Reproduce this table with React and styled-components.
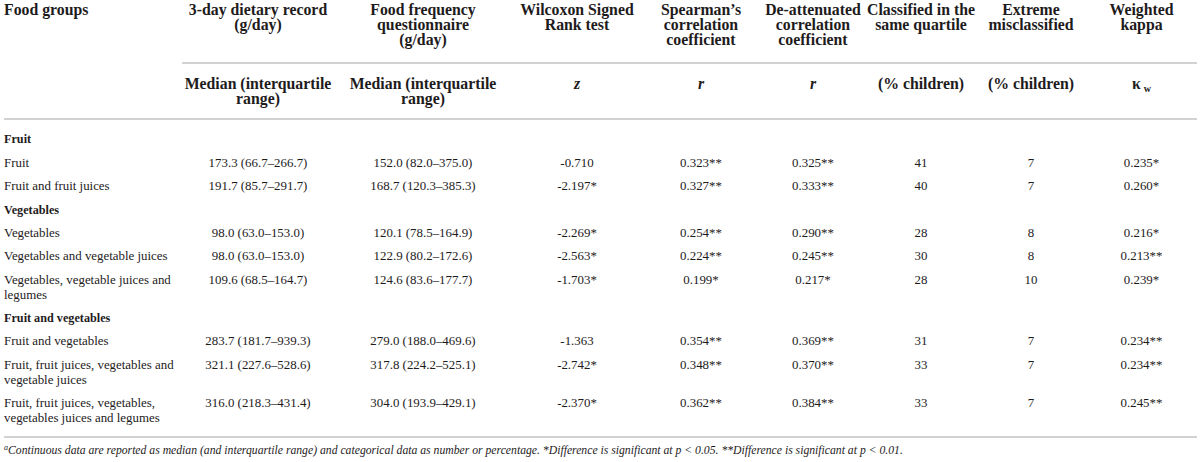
import React from "react";
import styled, { createGlobalStyle } from "styled-components";

const serif = `"Liberation Serif", "Times New Roman", serif`;

const GlobalStyle = createGlobalStyle`
    html, body {
        margin: 0;
        padding: 0;
        background: #ffffff;
    }
    body {
        font-family: ${serif};
        color: #1e1b1c;
    }
`;

const Page = styled.div`
    width: 1200px;
    height: 462px;
    padding: 0 3px 0 4px;
    box-sizing: border-box;
    overflow: hidden;
`;

const Table = styled.table`
    width: 1193px;
    border-collapse: collapse;
    table-layout: fixed;
    font-family: ${serif};
`;

const HeadCell = styled.th`
    font-family: ${serif};
    font-size: 15.8px;
    font-weight: bold;
    line-height: 15px;
    white-space: nowrap;
    vertical-align: top;
    text-align: ${props => (props.$left ? "left" : "center")};
    padding: ${props => (props.$top ? "2px 0 15px" : "12px 0 12px")};
    border-bottom: ${props => (props.$line ? "2px solid #d2d2d2" : "none")};
`;

const Stat = styled.i`
    font-weight: bold;
`;

const Sub = styled.span`
    font-size: 10px;
    vertical-align: -3px;
    margin-left: 3px;
`;

const GroupCell = styled.td`
    font-family: ${serif};
    font-size: 12.2px;
    font-weight: bold;
    line-height: 15px;
    text-align: left;
    white-space: nowrap;
    padding: ${props => (props.$first ? "12px 0 4.5px" : "4.5px 0 4px")};
`;

const Cell = styled.td`
    font-family: ${serif};
    font-size: 12.9px;
    line-height: 15px;
    vertical-align: top;
    white-space: nowrap;
    text-align: ${props => (props.$left ? "left" : "center")};
    padding: 4px 0 ${props => (props.$last ? "10px" : "4.4px")};
    border-bottom: ${props => (props.$last ? "2px solid #d2d2d2" : "none")};
`;

const Footnote = styled.p`
    margin: 6px 0 0;
    font-family: ${serif};
    font-size: 11.7px;
    line-height: 14px;
    font-style: italic;
    white-space: nowrap;
`;

const Sup = styled.sup`
    font-size: 8px;
    vertical-align: 4px;
    line-height: 0;
`;

const widths = [178, 152, 178, 130, 118, 106, 110, 110, 111];

const groups = [
    {
        label: "Fruit",
        rows: [
            { name: ["Fruit"], vals: ["173.3 (66.7–266.7)", "152.0 (82.0–375.0)", "-0.710", "0.323**", "0.325**", "41", "7", "0.235*"] },
            { name: ["Fruit and fruit juices"], vals: ["191.7 (85.7–291.7)", "168.7 (120.3–385.3)", "-2.197*", "0.327**", "0.333**", "40", "7", "0.260*"] },
        ],
    },
    {
        label: "Vegetables",
        rows: [
            { name: ["Vegetables"], vals: ["98.0 (63.0–153.0)", "120.1 (78.5–164.9)", "-2.269*", "0.254**", "0.290**", "28", "8", "0.216*"] },
            { name: ["Vegetables and vegetable juices"], vals: ["98.0 (63.0–153.0)", "122.9 (80.2–172.6)", "-2.563*", "0.224**", "0.245**", "30", "8", "0.213**"] },
            { name: ["Vegetables, vegetable juices and", "legumes"], vals: ["109.6 (68.5–164.7)", "124.6 (83.6–177.7)", "-1.703*", "0.199*", "0.217*", "28", "10", "0.239*"] },
        ],
    },
    {
        label: "Fruit and vegetables",
        rows: [
            { name: ["Fruit and vegetables"], vals: ["283.7 (181.7–939.3)", "279.0 (188.0–469.6)", "-1.363", "0.354**", "0.369**", "31", "7", "0.234**"] },
            { name: ["Fruit, fruit juices, vegetables and", "vegetable juices"], vals: ["321.1 (227.6–528.6)", "317.8 (224.2–525.1)", "-2.742*", "0.348**", "0.370**", "33", "7", "0.234**"] },
            { name: ["Fruit, fruit juices, vegetables,", "vegetables juices and legumes"], vals: ["316.0 (218.3–431.4)", "304.0 (193.9–429.1)", "-2.370*", "0.362**", "0.384**", "33", "7", "0.245**"] },
        ],
    },
];

function Lines({ parts }) {
    return parts.map((p, i) => (
        <React.Fragment key={i}>
            {i > 0 && <br />}
            {p}
        </React.Fragment>
    ));
}

export default function App() {
    return (
        <Page>
            <GlobalStyle />
            <Table>
                <colgroup>
                    {widths.map((w, i) => <col key={i} style={{ width: w }} />)}
                </colgroup>
                <thead>
                    <tr>
                        <HeadCell $top $left $line rowSpan={2}>Food groups</HeadCell>
                        <HeadCell $top $line><Lines parts={["3-day dietary record", "(g/day)"]} /></HeadCell>
                        <HeadCell $top $line><Lines parts={["Food frequency", "questionnaire", "(g/day)"]} /></HeadCell>
                        <HeadCell $top $line><Lines parts={["Wilcoxon Signed", "Rank test"]} /></HeadCell>
                        <HeadCell $top $line><Lines parts={["Spearman’s", "correlation", "coefficient"]} /></HeadCell>
                        <HeadCell $top $line><Lines parts={["De-attenuated", "correlation", "coefficient"]} /></HeadCell>
                        <HeadCell $top $line><Lines parts={["Classified in the", "same quartile"]} /></HeadCell>
                        <HeadCell $top $line><Lines parts={["Extreme", "misclassified"]} /></HeadCell>
                        <HeadCell $top $line><Lines parts={["Weighted", "kappa"]} /></HeadCell>
                    </tr>
                    <tr>
                        <HeadCell $line><Lines parts={["Median (interquartile", "range)"]} /></HeadCell>
                        <HeadCell $line><Lines parts={["Median (interquartile", "range)"]} /></HeadCell>
                        <HeadCell $line><Stat>z</Stat></HeadCell>
                        <HeadCell $line><Stat>r</Stat></HeadCell>
                        <HeadCell $line><Stat>r</Stat></HeadCell>
                        <HeadCell $line>(% children)</HeadCell>
                        <HeadCell $line>(% children)</HeadCell>
                        <HeadCell $line>κ<Sub>w</Sub></HeadCell>
                    </tr>
                </thead>
                <tbody>
                    {groups.map((g, gi) => (
                        <React.Fragment key={g.label}>
                            <tr>
                                <GroupCell $first={gi === 0} colSpan={9}>{g.label}</GroupCell>
                            </tr>
                            {g.rows.map((r, ri) => {
                                const last = gi === groups.length - 1 && ri === g.rows.length - 1;
                                return (
                                    <tr key={ri}>
                                        <Cell $left $last={last}><Lines parts={r.name} /></Cell>
                                        {r.vals.map((v, vi) => (
                                            <Cell key={vi} $last={last}>{v}</Cell>
                                        ))}
                                    </tr>
                                );
                            })}
                        </React.Fragment>
                    ))}
                </tbody>
            </Table>
            <Footnote>
                <Sup>a</Sup>Continuous data are reported as median (and interquartile range) and categorical data as number or percentage. *Difference is significant at p &lt; 0.05. **Difference is significant at p &lt; 0.01.
            </Footnote>
        </Page>
    );
}
